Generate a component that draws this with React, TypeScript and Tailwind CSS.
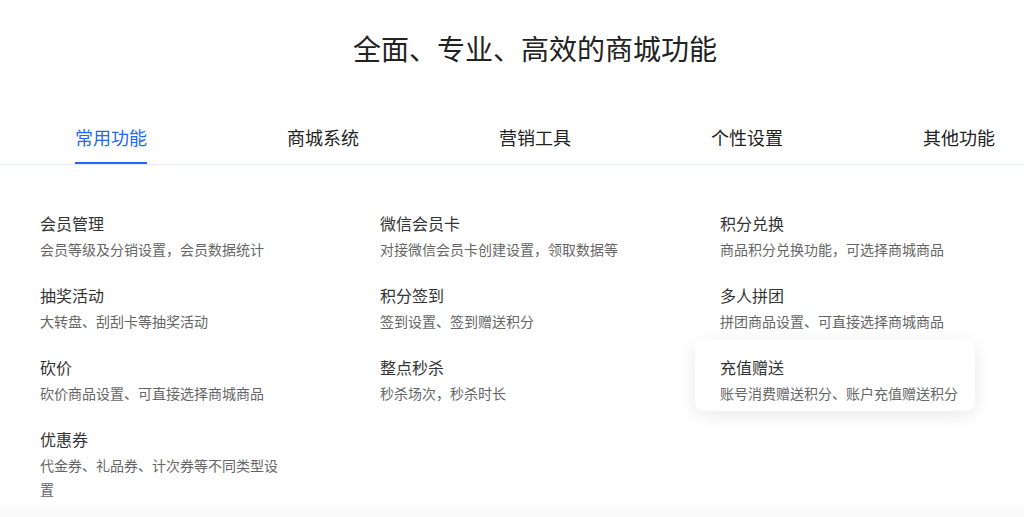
const tabs = ["常用功能", "商城系统", "营销工具", "个性设置", "其他功能"];

const features = [
  { title: "会员管理", desc: "会员等级及分销设置，会员数据统计" },
  { title: "微信会员卡", desc: "对接微信会员卡创建设置，领取数据等" },
  { title: "积分兑换", desc: "商品积分兑换功能，可选择商城商品" },
  { title: "抽奖活动", desc: "大转盘、刮刮卡等抽奖活动" },
  { title: "积分签到", desc: "签到设置、签到赠送积分" },
  { title: "多人拼团", desc: "拼团商品设置、可直接选择商城商品" },
  { title: "砍价", desc: "砍价商品设置、可直接选择商城商品" },
  { title: "整点秒杀", desc: "秒杀场次，秒杀时长" },
  { title: "充值赠送", desc: "账号消费赠送积分、账户充值赠送积分", active: true },
  { title: "优惠券", desc: "代金券、礼品券、计次券等不同类型设置" },
];

export default function App() {
  return (
    <div
      className="flex h-[517px] w-full flex-col overflow-hidden bg-white"
      style={{ fontFamily: '"Noto Sans CJK SC", "Noto Sans", sans-serif' }}
    >
      <h1 className="ml-[5px] w-[1060px] pt-[28px] text-center text-[28px] leading-[40px] text-[#222]">
        全面、专业、高效的商城功能
      </h1>

      <div className="mt-[42px] border-b border-[#e6ebf1]">
        <div className="ml-[5px] flex w-[1060px]">
          {tabs.map((t, i) => (
            <div key={t} className="flex w-[212px] justify-center">
              <span
                className={
                  i === 0
                    ? "border-b-2 border-[#2468f2] pt-[15px] pb-[13px] text-[18px] leading-[24px] text-[#2468f2]"
                    : "border-b-2 border-transparent pt-[15px] pb-[13px] text-[18px] leading-[24px] text-[#222]"
                }
              >
                {t}
              </span>
            </div>
          ))}
        </div>
      </div>

      <section className="h-[340px] shrink-0 pt-[30px] pl-[15px]">
        <div className="grid grid-cols-[280px_280px_280px] gap-x-[60px]">
          {features.map((f) => (
            <div
              key={f.title}
              className={
                f.active
                  ? "rounded-lg bg-white pt-[16px] pr-[15px] pb-[6px] pl-[25px] shadow-[0_4px_18px_rgba(0,0,0,0.09)]"
                  : "rounded-lg pt-[16px] pr-[15px] pb-[6px] pl-[25px]"
              }
            >
              <div className="text-[16px] leading-[24px] text-[#333]">{f.title}</div>
              <div className="mt-[2px] text-[14px] leading-[24px] text-[#666]">{f.desc}</div>
            </div>
          ))}
        </div>
      </section>

      <div className="flex-1 bg-[#fafafa]" />
    </div>
  );
}
